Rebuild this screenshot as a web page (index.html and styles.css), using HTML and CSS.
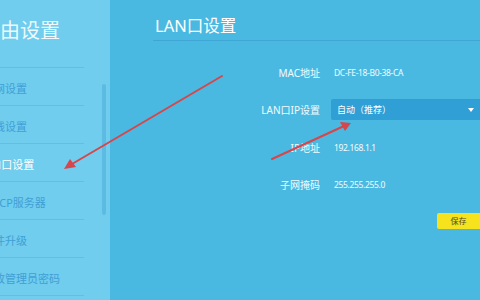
FILE: index.html
```html
<!DOCTYPE html>
<html lang="zh">
<head>
<meta charset="utf-8">
<link rel="stylesheet" href="styles.css">
</head>
<body>
<div class="page">
  <aside class="sidebar">
    <div class="side-title">路由设置</div>
    <ul class="menu">
      <li>上网设置</li>
      <li>无线设置</li>
      <li class="active">LAN口设置</li>
      <li>DHCP服务器</li>
      <li>软件升级</li>
      <li>修改管理员密码</li>
    </ul>
    <div class="scrollbar"></div>
  </aside>
  <main class="main">
    <h1 class="title">LAN口设置</h1>
    <div class="form">
      <div class="label">MAC地址</div><div class="value">DC-FE-18-B0-38-CA</div>
      <div class="label">LAN口IP设置</div>
      <div class="select"><span>自动（推荐）</span><span class="caret"></span></div>
      <div class="label">IP地址</div><div class="value">192.168.1.1</div>
      <div class="label">子网掩码</div><div class="value">255.255.255.0</div>
    </div>
    <div class="actions"><button class="save">保存</button></div>
  </main>
  <svg class="arrows" width="480" height="300" viewBox="0 0 480 300">
    <g stroke="#d8454a" stroke-width="2" stroke-linecap="round" fill="none">
      <line x1="222" y1="76" x2="72" y2="164"/>
      <line x1="272" y1="159" x2="344" y2="126"/>
    </g>
    <g fill="#d8454a">
      <polygon points="64,169 70,159 76,167"/>
      <polygon points="351,123 340,122 345,131"/>
    </g>
  </svg>
</div>
</body>
</html>
```
FILE: styles.css
```css
html, body {
  margin: 0;
  padding: 0;
}
body {
  width: 480px;
  height: 300px;
  overflow: hidden;
  font-family: "Noto Sans", "Noto Sans CJK SC", sans-serif;
  background: #4ab9e1;
}
.page {
  position: relative;
  display: flex;
  width: 480px;
  height: 300px;
  overflow: hidden;
}
.sidebar {
  position: relative;
  width: 110px;
  flex: none;
  background: #70cdee;
  overflow: hidden;
}
.side-title {
  width: 84px;
  height: 49px;
  padding-top: 18px;
  line-height: 26px;
  font-size: 20px;
  text-indent: -20px;
  color: #eef9fd;
  border-bottom: 1px solid #5fbfe5;
  white-space: nowrap;
}
.menu {
  list-style: none;
  margin: 0;
  padding: 0;
  width: 84px;
}
.menu li {
  height: 35px;
  padding-top: 2px;
  line-height: 37px;
  font-size: 11px;
  text-indent: -17px;
  color: #3f9fd5;
  border-bottom: 1px solid #5fbfe5;
  white-space: nowrap;
}
.menu li.active {
  color: #ffffff;
  text-indent: -20px;
}
.scrollbar {
  position: absolute;
  left: 102px;
  top: 84px;
  width: 4px;
  height: 131px;
  border-radius: 2px;
  background: #5cbbe2;
}
.main {
  flex: 1;
  padding-left: 43px;
  color: #ffffff;
}
.title {
  margin: 0;
  padding: 14px 0 2px 2px;
  line-height: 24px;
  font-size: 16.5px;
  font-weight: normal;
  border-bottom: 1.5px solid #3fa5d4;
}
.form {
  margin-top: 20px;
  display: grid;
  grid-template-columns: 167px 1fr;
  grid-auto-rows: 22px;
  column-gap: 11px;
  row-gap: 15.5px;
  align-items: center;
}
.label {
  text-align: right;
  font-size: 10px;
  color: #f2fbfe;
  white-space: nowrap;
}
.value {
  padding-left: 3px;
  font-size: 8.5px;
  letter-spacing: -0.35px;
  color: #f2fbfe;
  white-space: nowrap;
}
.select {
  height: 21px;
  display: flex;
  align-items: center;
  justify-content: space-between;
  padding: 0 6px;
  background: #2f9fd6;
  border-radius: 2px 0 0 2px;
  font-size: 9px;
  color: #ffffff;
}
.caret {
  width: 0;
  height: 0;
  border-left: 3px solid transparent;
  border-right: 3px solid transparent;
  border-top: 4px solid #ffffff;
}
.actions {
  display: flex;
  justify-content: flex-end;
  margin-top: 17px;
}
.save {
  width: 43px;
  height: 16px;
  padding: 0;
  border: none;
  border-radius: 2px 0 0 2px;
  background: #f6e31e;
  color: #4d4a28;
  font-family: "Noto Sans CJK SC", sans-serif;
  font-size: 8px;
  line-height: 16px;
}
.arrows {
  position: absolute;
  left: 0;
  top: 0;
  pointer-events: none;
}
```
